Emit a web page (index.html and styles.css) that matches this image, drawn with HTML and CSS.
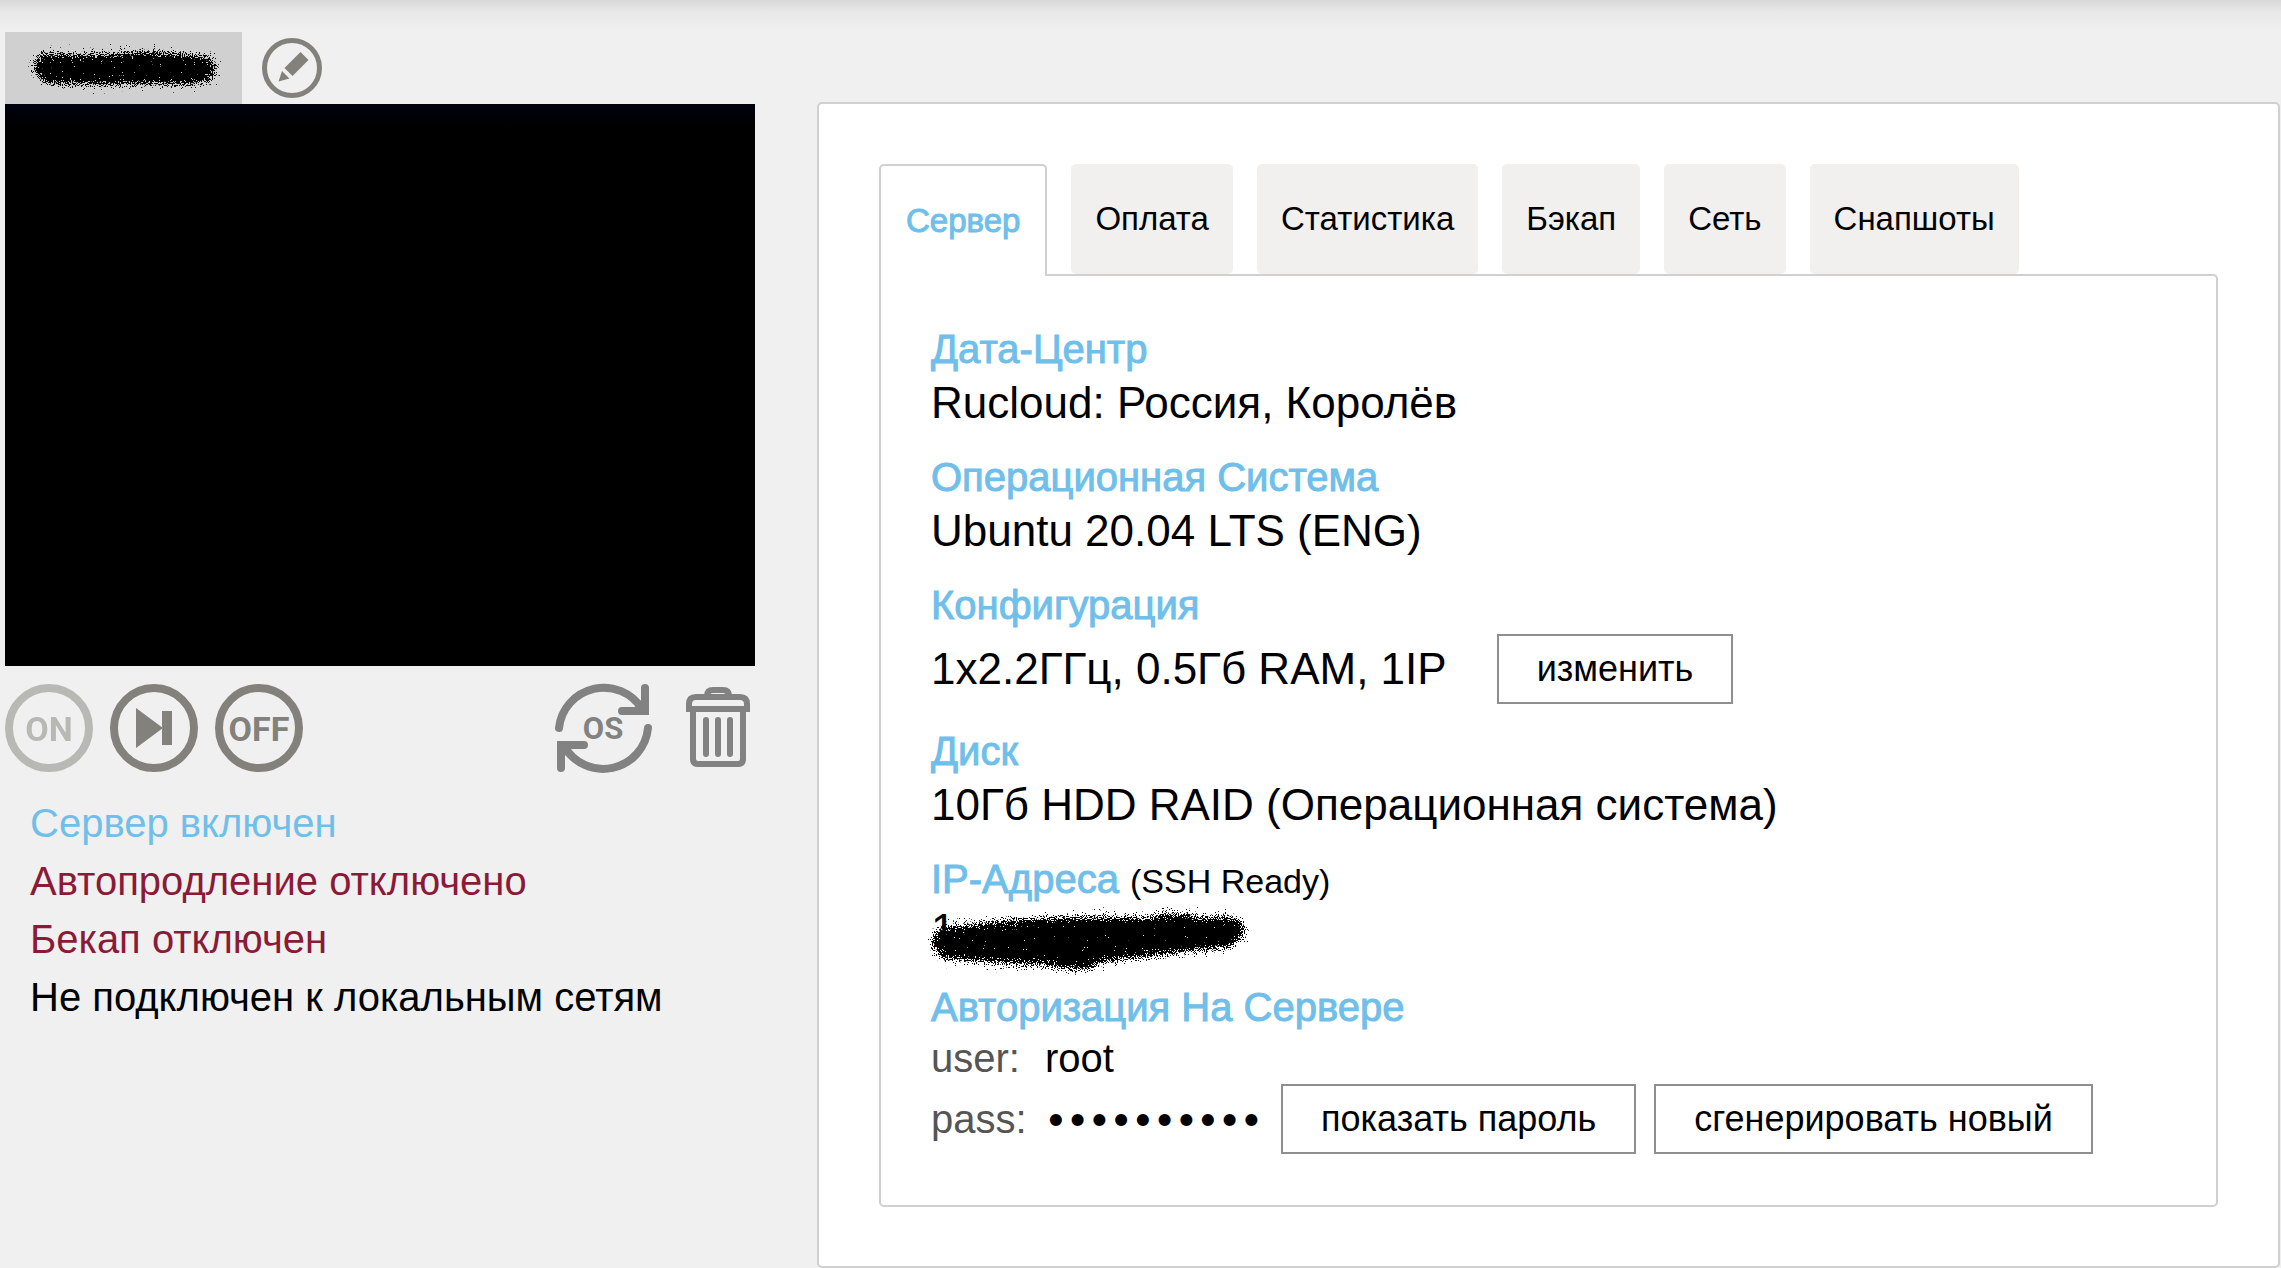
FILE: index.html
```html
<!DOCTYPE html>
<html lang="ru">
<head>
<meta charset="utf-8">
<meta name="viewport" content="width=device-width, initial-scale=1">
<title>Сервер</title>
<link rel="stylesheet" href="styles.css">
</head>
<body>
<svg class="defs" width="0" height="0" aria-hidden="true">
  <filter id="spray" filterUnits="userSpaceOnUse" x="-10" y="-10" width="370" height="110">
    <feGaussianBlur in="SourceAlpha" stdDeviation="6" result="soft"/>
    <feTurbulence type="fractalNoise" baseFrequency="0.9" numOctaves="2" seed="7" result="noise"/>
    <feComposite in="soft" in2="noise" operator="arithmetic" k1="0" k2="1.7" k3="2.6" k4="-2.1" result="mix"/>
    <feComponentTransfer in="mix" result="grain"><feFuncA type="linear" slope="14" intercept="-1"/></feComponentTransfer>
    <feColorMatrix in="grain" type="matrix" values="0 0 0 0 0  0 0 0 0 0  0 0 0 0 0  0 0 0 1 0" result="ink"/>
    <feMorphology in="SourceAlpha" operator="dilate" radius="9" result="reach"/>
    <feComposite in="ink" in2="reach" operator="in"/>
  </filter>
</svg>
<div class="page">
  <aside class="machine">
    <div class="machine-head">
      <div class="machine-name">
        <svg width="200" height="56" viewBox="0 0 200 56" role="img" aria-label="Имя скрыто">
          <path filter="url(#spray)" fill="none" stroke="#000" stroke-width="26" stroke-linecap="round" stroke-linejoin="round" d="M18 26 L60 28 L120 24 L176 29 M22 31 L80 32 L130 31 L160 32"/>
        </svg>
      </div>
      <button class="icon-button" type="button" aria-label="Переименовать">
        <svg width="60" height="60" viewBox="0 0 60 60" fill="#82817c">
          <circle cx="30" cy="30" r="27.5" fill="none" stroke="#82817c" stroke-width="5"/>
          <path d="M38.500 14 L46.500 22 L30.500 38 L22.500 30 Z M20 33 L27.500 40.500 L16.500 43.500 Z"/>
        </svg>
      </button>
    </div>
    <div class="screen"></div>
    <div class="controls">
      <button class="icon-button faded" type="button" aria-label="Включить">
        <svg width="88" height="88" viewBox="0 0 88 88">
          <circle cx="44" cy="44" r="40" fill="none" stroke="#82817c" stroke-width="8"/>
          <text class="glyph" x="44" y="57">ON</text>
        </svg>
      </button>
      <button class="icon-button" type="button" aria-label="Перезагрузить">
        <svg width="88" height="88" viewBox="0 0 88 88" fill="#82817c">
          <circle cx="44" cy="44" r="40" fill="none" stroke="#82817c" stroke-width="8"/>
          <path d="M26 24 L53 44 L26 64 Z M52 27 H62 V61 H52 Z"/>
        </svg>
      </button>
      <button class="icon-button" type="button" aria-label="Выключить">
        <svg width="88" height="88" viewBox="0 0 88 88">
          <circle cx="44" cy="44" r="40" fill="none" stroke="#82817c" stroke-width="8"/>
          <text class="glyph" x="44" y="57">OFF</text>
        </svg>
      </button>
      <button class="icon-button reinstall" type="button" aria-label="Переустановить ОС">
        <svg width="97" height="97" viewBox="0 0 97 97" fill="none" stroke="#828282" stroke-width="8" stroke-linecap="round">
          <path d="M4 48 A45 45 0 0 1 87 29 M93 48 A45 45 0 0 1 9 66"/>
          <path d="M67 31 H90 V8 M29 65 H6 V88"/>
          <path fill="#828282" stroke="none" d="M94 35 H72 L88 18 Z M2 61 H24 L8 78 Z"/>
          <text class="glyph-os" stroke="none" x="48" y="59">OS</text>
        </svg>
      </button>
      <button class="icon-button" type="button" aria-label="Удалить">
        <svg width="70" height="88" viewBox="0 0 70 88" fill="none" stroke="#828282" stroke-width="6" stroke-linecap="round">
          <path stroke-linecap="butt" d="M6 28 V20 Q6 13 13 13 H57 Q64 13 64 20 V28 M3 25 H67"/>
          <path d="M24 12 Q24 6 30 6 H40 Q46 6 46 12 M10 26 V75 Q10 80 15 80 H55 Q60 80 60 75 V26 M23 36 V70 M35 36 V70 M47 36 V70"/>
        </svg>
      </button>
    </div>
    <ul class="status">
      <li class="on">Сервер включен</li>
      <li class="off">Автопродление отключено</li>
      <li class="off">Бекап отключен</li>
      <li>Не подключен к локальным сетям</li>
    </ul>
  </aside>

  <main class="panel">
    <nav class="tabs">
      <a class="tab active" href="#server">Сервер</a>
      <a class="tab" href="#payment">Оплата</a>
      <a class="tab" href="#stats">Статистика</a>
      <a class="tab" href="#backup">Бэкап</a>
      <a class="tab" href="#network">Сеть</a>
      <a class="tab" href="#snapshots">Снапшоты</a>
    </nav>
    <div class="details" id="server">
      <section class="field">
        <h2>Дата-Центр</h2>
        <p class="value">Rucloud: Россия, Королёв</p>
      </section>
      <section class="field">
        <h2>Операционная Система</h2>
        <p class="value">Ubuntu 20.04 LTS (ENG)</p>
      </section>
      <section class="field">
        <h2>Конфигурация</h2>
        <div class="config">
          <p class="value">1x2.2ГГц, 0.5Гб RAM, 1IP</p>
          <button class="button" type="button">изменить</button>
        </div>
      </section>
      <section class="field">
        <h2>Диск</h2>
        <p class="value">10Гб HDD RAID (Операционная система)</p>
      </section>
      <section class="field">
        <h2>IP-Адреса <span class="note">(SSH Ready)</span></h2>
        <div class="address">
          <svg width="340" height="84" viewBox="0 0 340 84" role="img" aria-label="Адрес скрыт">
            <text class="digit" x="10" y="51">1</text>
            <path filter="url(#spray)" fill="none" stroke="#000" stroke-width="28" stroke-linecap="round" stroke-linejoin="round" d="M24 47 L90 40 L160 36 L240 38 L310 36 M28 52 L90 56 L150 58 L230 48 L304 40 M60 46 L260 38 M140 61 L165 62 M240 34 L265 33"/>
          </svg>
        </div>
      </section>
      <section class="field">
        <h2>Авторизация На Сервере</h2>
        <div class="login">
          <span class="key">user:</span><span>root</span>
        </div>
        <div class="login">
          <label class="key" for="pass">pass:</label>
          <input class="secret" id="pass" type="password" value="0000000000" readonly>
          <button class="button" type="button">показать пароль</button>
          <button class="button" type="button">сгенерировать новый</button>
        </div>
      </section>
    </div>
  </main>
</div>
</body>
</html>
```
FILE: styles.css
```css
* { box-sizing: border-box; }

body {
  margin: 0;
  background: #f0f0f0 linear-gradient(#d9d9d9, #e8e8e8 12px, #f0f0f0 30px) no-repeat 0 0 / 100% 30px;
  color: #000;
  font-family: "Liberation Sans", Arial, sans-serif;
  font-size: 40px;
}

h2, p, ul { margin: 0; padding: 0; font-weight: normal; }
svg { display: block; overflow: visible; }
.defs { position: absolute; }

.page {
  display: grid;
  grid-template-columns: minmax(0, 750fr) minmax(0, 1463fr);
  gap: 62px;
  align-items: start;
  padding: 32px 1px 2px 5px;
}

.machine-head { display: flex; align-items: center; gap: 20px; height: 72px; }
.machine-name {
  display: flex;
  align-items: center;
  height: 72px;
  padding: 0 14px 0 23px;
  background: #d0d0d0;
}
.icon-button { padding: 0; border: 0; background: none; cursor: pointer; }
.faded { opacity: 0.5; }

.screen {
  aspect-ratio: 750 / 562;
  background: linear-gradient(#00020e, #000 24px);
}

.controls {
  display: flex;
  align-items: center;
  gap: 17px;
  height: 124px;
  padding-right: 2px;
}
.reinstall { margin-left: auto; margin-right: 14px; }
.glyph { font-family: Roboto, sans-serif; font-size: 34px; font-weight: bold; text-anchor: middle; fill: #82817c; }
.glyph-os { font-family: Roboto, sans-serif; font-size: 31px; font-weight: bold; text-anchor: middle; fill: #828282; }

.status { list-style: none; padding: 4px 0 0 25px; line-height: 58px; }
.on { color: #70bfeb; }
.off { color: #8b1a37; }

.panel {
  margin-top: 70px;
  padding: 60px 60px 59px;
  border: 2px solid #d0d0d0;
  border-radius: 5px;
  background: #fff;
}

.tabs { display: flex; gap: 24px; }
.tab {
  height: 110px;
  padding: 0 24px;
  border-radius: 5px;
  background: #f1f0ee;
  color: #000;
  font-size: 33px;
  line-height: 110px;
  text-decoration: none;
}
.tab.active {
  position: relative;
  height: 112px;
  margin-bottom: -2px;
  padding: 0 25px;
  border: 2px solid #d0d0d0;
  border-bottom: 0;
  border-radius: 5px 5px 0 0;
  background: #fff;
  color: #70bfeb;
  -webkit-text-stroke: 1px #70bfeb;
}

.details {
  padding: 48px 50px 51px;
  border: 2px solid #d0d0d0;
  border-radius: 0 5px 5px 5px;
}
.field + .field { margin-top: 20px; }
.field h2 {
  color: #70bfeb;
  font-size: 40px;
  line-height: 50px;
  -webkit-text-stroke: 1px #70bfeb;
}
.field .note { color: #000; font-size: 34px; -webkit-text-stroke: 0; }
.value { font-size: 44px; line-height: 58px; }

.config { display: flex; align-items: center; gap: 50px; padding: 4px 0 2px; }
.button {
  height: 70px;
  padding: 0 38px;
  border: 2px solid #8f8f8f;
  background: #fff;
  color: #000;
  font-family: inherit;
  font-size: 36px;
  cursor: pointer;
}

.address { display: flow-root; height: 56px; margin-left: -10px; }
.address svg { margin-top: -12px; }
.digit { font-size: 44px; }

.login { display: flex; align-items: center; gap: 18px; line-height: 52px; }
.key { width: 96px; color: #555; }
.secret {
  width: 218px;
  padding: 3px 0 0;
  border: 0;
  outline: 0;
  background: none;
  color: #000;
  font-family: "DejaVu Sans", sans-serif;
  font-size: 34px;
  font-weight: bold;
}
```
